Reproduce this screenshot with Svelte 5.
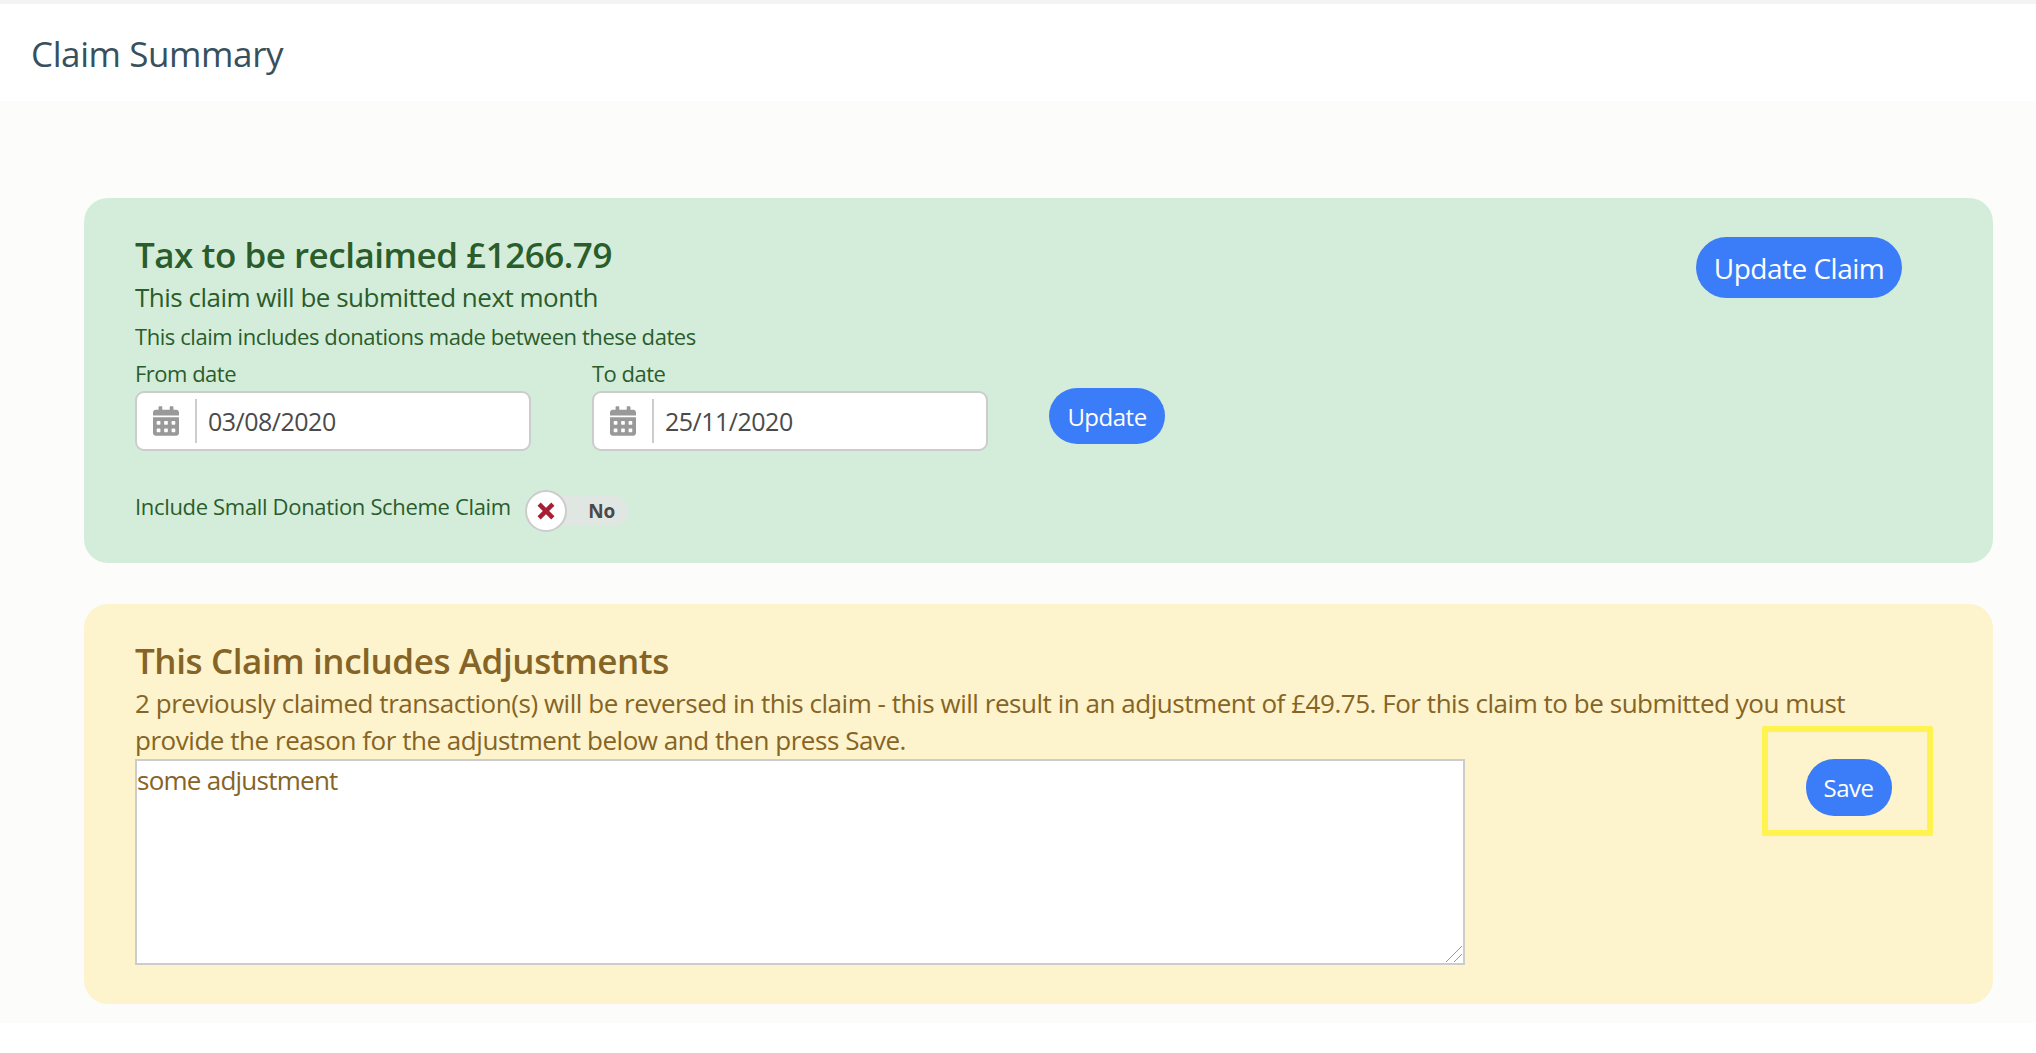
<script>
	const dates = [
		{ label: 'From date', value: '03/08/2020' },
		{ label: 'To date', value: '25/11/2020' }
	];
	const calendar =
		'M0 464c0 26.5 21.5 48 48 48h352c26.5 0 48-21.5 48-48V192H0v272zm320-196c0-6.6 5.4-12 12-12h40c6.6 0 12 5.4 12 12v40c0 6.6-5.4 12-12 12h-40c-6.6 0-12-5.4-12-12v-40zm0 128c0-6.6 5.4-12 12-12h40c6.6 0 12 5.4 12 12v40c0 6.6-5.4 12-12 12h-40c-6.6 0-12-5.4-12-12v-40zM192 268c0-6.6 5.4-12 12-12h40c6.6 0 12 5.4 12 12v40c0 6.6-5.4 12-12 12h-40c-6.6 0-12-5.4-12-12v-40zm0 128c0-6.6 5.4-12 12-12h40c6.6 0 12 5.4 12 12v40c0 6.6-5.4 12-12 12h-40c-6.6 0-12-5.4-12-12v-40zM64 268c0-6.6 5.4-12 12-12h40c6.6 0 12 5.4 12 12v40c0 6.6-5.4 12-12 12H76c-6.6 0-12-5.4-12-12v-40zm0 128c0-6.6 5.4-12 12-12h40c6.6 0 12 5.4 12 12v40c0 6.6-5.4 12-12 12H76c-6.6 0-12-5.4-12-12v-40zM400 64h-48V16c0-8.8-7.2-16-16-16h-32c-8.8 0-16 7.2-16 16v48H160V16c0-8.8-7.2-16-16-16h-32c-8.8 0-16 7.2-16 16v48H48C21.5 64 0 85.5 0 112v48h448v-48c0-26.5-21.5-48-48-48z';
</script>

<div class="page">
	<header><h1>Claim Summary</h1></header>

	<main>
		<section class="card green">
			<div class="claim">
				<h2>Tax to be reclaimed £1266.79</h2>
				<p class="lead">This claim will be submitted next month</p>
				<p class="small">This claim includes donations made between these dates</p>

				<div class="dates">
					{#each dates as d}
						<div class="field">
							<span class="field-label">{d.label}</span>
							<div class="date-input">
								<span class="addon">
									<svg viewBox="0 0 448 512" width="26" height="30"><path d={calendar} /></svg>
								</span>
								<input type="text" value={d.value} />
							</div>
						</div>
					{/each}
					<button class="btn update">Update</button>
				</div>

				<div class="sds">
					<span>Include Small Donation Scheme Claim</span>
					<div class="switch">
						<span class="knob">
							<svg viewBox="0 0 16 16" width="20" height="20">
								<path d="M2.5 2.5l11 11M13.5 2.5l-11 11" />
							</svg>
						</span>
						<b>No</b>
					</div>
				</div>
			</div>
			<button class="btn update-claim">Update Claim</button>
		</section>

		<section class="card yellow">
			<h2>This Claim includes Adjustments</h2>
			<p class="lead note">
				2 previously claimed transaction(s) will be reversed in this claim - this will result in an
				adjustment of £49.75. For this claim to be submitted you must provide the reason for the
				adjustment below and then press Save.
			</p>
			<div class="reason">
				<div class="area">
					<textarea>some adjustment</textarea>
					<svg class="grip" viewBox="0 0 16 16" width="16" height="16">
						<path d="M0 16L16 0M8 16l8-8" />
					</svg>
				</div>
				<div class="highlight"><button class="btn save">Save</button></div>
			</div>
		</section>
	</main>
</div>

<style>
	:global(body) {
		margin: 0;
		background: #fff;
	}

	.page {
		font-family: 'Open Sans', 'Noto Sans', sans-serif;
		height: 1053px;
		border-top: 4px solid #f3f3f2;
		box-sizing: border-box;
	}

	header {
		height: 97px;
		display: flex;
		align-items: center;
		padding-left: 31px;
		background: #fff;
		border-top-left-radius: 12px;
	}

	h1 {
		margin: 2px 0 0;
		font-size: 35px;
		font-weight: 400;
		color: #37505e;
		letter-spacing: -0.4px;
	}

	main {
		background: #fcfcfa;
		height: 922px;
		box-sizing: border-box;
		padding: 97px 43px 0 84px;
		display: flex;
		flex-direction: column;
		gap: 41px;
	}

	.card {
		border-radius: 24px;
		padding: 0 51px;
	}

	.green {
		height: 365px;
		background: #d4eddb;
		color: #2a5d2b;
		display: flex;
		justify-content: space-between;
		align-items: flex-start;
	}

	.yellow {
		height: 400px;
		background: #fdf3cc;
		color: #856426;
	}

	h2 {
		margin: 0;
		font-size: 35px;
		line-height: 48px;
		font-weight: 600;
		letter-spacing: -0.48px;
	}

	.green h2 {
		padding-top: 33px;
	}

	.yellow h2 {
		padding-top: 33px;
		letter-spacing: -0.4px;
	}

	p {
		margin: 0;
	}

	.lead {
		font-size: 26px;
		line-height: 37px;
		letter-spacing: -0.5px;
	}

	.note {
		max-width: 1730px;
		letter-spacing: -0.46px;
	}

	.small {
		font-size: 22px;
		line-height: 30px;
		margin-top: 5px;
		letter-spacing: -0.43px;
	}

	.dates {
		display: flex;
		align-items: flex-end;
		gap: 61px;
		margin-top: 7px;
	}

	.field-label {
		display: block;
		font-size: 22px;
		line-height: 30px;
		margin-bottom: 3px;
		letter-spacing: -0.5px;
	}

	.date-input {
		width: 396px;
		height: 60px;
		box-sizing: border-box;
		display: flex;
		align-items: center;
		background: #fff;
		border: 2px solid #ccc;
		border-radius: 9px;
	}

	.addon {
		width: 60px;
		height: 44px;
		flex: none;
		display: flex;
		align-items: center;
		justify-content: center;
		border-right: 2px solid #ccc;
		box-sizing: border-box;
		fill: #999;
	}

	input {
		border: 0;
		outline: 0;
		background: none;
		flex: 1;
		min-width: 0;
		padding: 0 0 0 11px;
		font: inherit;
		font-size: 25px;
		color: #4a4a4a;
		letter-spacing: -0.5px;
	}

	.btn {
		border: 0;
		background: #3b7df8;
		color: #fff;
		font-family: inherit;
		padding: 0;
		letter-spacing: -0.5px;
	}

	.update {
		width: 116px;
		height: 56px;
		border-radius: 28px;
		font-size: 24px;
		margin: 0 0 7px;
	}

	.sds {
		display: flex;
		align-items: center;
		gap: 14px;
		margin-top: 35px;
		font-size: 22px;
		letter-spacing: -0.33px;
	}

	.switch {
		position: relative;
		width: 103px;
		height: 30px;
		margin-top: 10px;
		border-radius: 15px;
		background: #e0e6e2;
		color: #4a4a4a;
		display: flex;
		align-items: center;
		justify-content: flex-end;
		padding-right: 13px;
		box-sizing: border-box;
		font-size: 19px;
	}

	.switch b {
		letter-spacing: -0.3px;
	}

	.knob {
		position: absolute;
		left: 0;
		top: -6px;
		width: 42px;
		height: 42px;
		box-sizing: border-box;
		border-radius: 50%;
		border: 2px solid #ccc;
		background: #fff;
		display: flex;
		align-items: center;
		justify-content: center;
	}

	.knob path {
		stroke: #a81f33;
		stroke-width: 3.6;
		fill: none;
	}

	.update-claim {
		width: 206px;
		height: 61px;
		border-radius: 31px;
		font-size: 28px;
		margin: 39px 40px 0 0;
		letter-spacing: -0.5px;
	}

	.reason {
		display: flex;
		justify-content: space-between;
		align-items: flex-start;
		margin-right: 9px;
	}

	.area {
		position: relative;
		width: 1330px;
		height: 206px;
	}

	textarea {
		display: block;
		width: 100%;
		height: 100%;
		box-sizing: border-box;
		border: 2px solid #ccc;
		background: #fff;
		color: #856426;
		padding: 1px 0 0;
		margin: 0;
		font: inherit;
		font-size: 26px;
		line-height: 37px;
		letter-spacing: -0.75px;
		outline: 0;
		resize: none;
	}

	.grip {
		position: absolute;
		right: 3px;
		bottom: 3px;
	}

	.grip path {
		stroke: #999;
		stroke-width: 1;
		fill: none;
	}

	.highlight {
		width: 171px;
		height: 110px;
		box-sizing: border-box;
		border: 6px solid #fff350;
		border-radius: 2px;
		margin-top: -33px;
		display: flex;
		align-items: center;
		justify-content: center;
	}

	.save {
		width: 86px;
		height: 57px;
		border-radius: 28px;
		font-size: 24px;
		margin: 12px 0 0 2px;
	}
</style>
